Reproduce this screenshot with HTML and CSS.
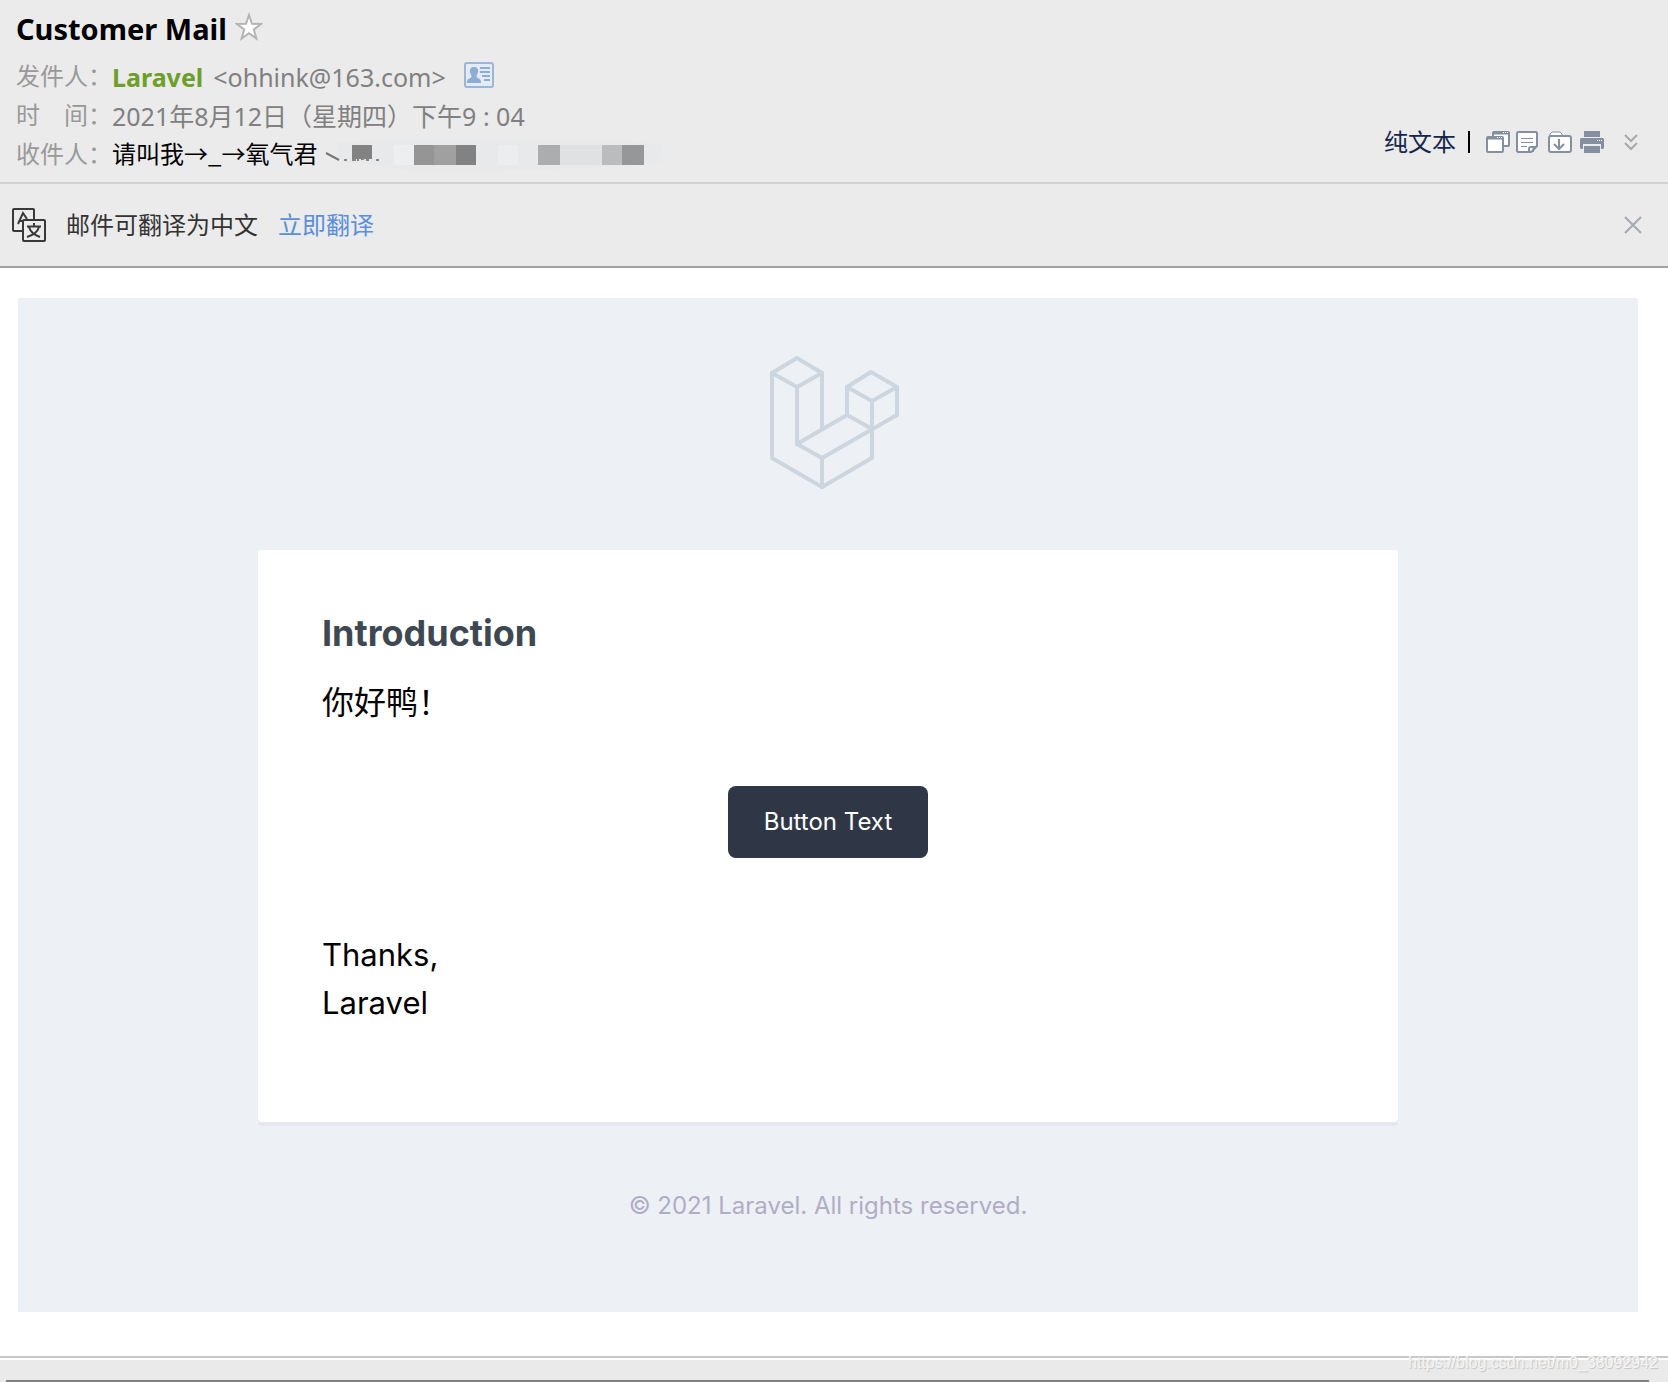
FILE: index.html
```
<!DOCTYPE html>
<html lang="zh-CN">
  <head>
    <meta charset="UTF-8" />
    <title>Customer Mail</title>
    <link rel="stylesheet" href="styles.css">
  </head>
  <body>
    <header class="mail-header">
      <div class="mail-info">
        <div class="subject">
          <h1>Customer Mail</h1>
          <button type="button" class="icon-button" aria-label="星标">
            <svg width="28" height="30" viewBox="0 0 28 30"><path d="M14 3 L17 11.8 L26 12 L18.8 17.4 L21.4 26.5 L14 21.2 L6.6 26.5 L9.2 17.4 L2 12 L11 11.8 Z" fill="#fff" stroke="#b4b4b4" stroke-width="2"/></svg>
          </button>
        </div>
        <dl class="fields">
          <dt>发件人：</dt>
          <dd>
            <b class="sender">Laravel</b>
            <span>&lt;ohhink@163.com&gt;</span>
            <button type="button" class="icon-button card-button" aria-label="联系人">
              <svg width="30" height="26" viewBox="0 0 30 26">
                <rect x="1" y="1" width="28" height="24" rx="2" fill="#e3ebf5" stroke="#9db6d6" stroke-width="2"/>
                <path d="M10 5 C13 5 14.5 7 14 10 C13.800 12 12.500 13 12.500 14.500 C12.500 16.500 17 16 17 20 V21 H3 V20 C3 16 7.500 16.500 7.500 14.500 C7.500 13 6.200 12 6 10 C5.500 7 7 5 10 5 Z" fill="#8fadd3"/>
                <path d="M16 6 H26 M16 10 H26 M18 14 H26 M20 18 H26" stroke="#8fadd3" stroke-width="2"/>
              </svg>
            </button>
          </dd>
          <dt>时&emsp;间：</dt>
          <dd>2021年8月12日（星期四）下午9 : 04</dd>
          <dt>收件人：</dt>
          <dd class="receiver">
            <span class="cjk">请叫我→_→氧气君</span>
            <!-- hidden address -->
            <svg class="mosaic" width="340" height="36" viewBox="0 0 340 36">
              <path d="M12 5 L60 3 L300 4 L338 8 L334 18 L338 26 L260 31 L170 34 H80 L60 29 L12 24 Z" fill="#e8e9eb"/>
              <path d="M1 16 L14 23" stroke="#777" stroke-width="2"/>
              <path d="M19 23 H22 M27 23 H31 M32 23 H34 M36 22 H39 M41 23 H44 M51 23 H54" stroke="#888" stroke-width="2"/>
              <rect x="27" y="8" width="20" height="14" fill="#828283"/>
              <rect x="69" y="8" width="20" height="20" fill="#edeef0"/>
              <rect x="89" y="8" width="20" height="20" fill="#959596"/>
              <rect x="109" y="8" width="22" height="20" fill="#a0a0a0"/>
              <rect x="131" y="8" width="20" height="20" fill="#828283"/>
              <rect x="173" y="8" width="20" height="20" fill="#ecedef"/>
              <rect x="213" y="8" width="22" height="20" fill="#acadae"/>
              <rect x="235" y="8" width="42" height="20" fill="#e0e1e2"/>
              <rect x="277" y="8" width="20" height="20" fill="#bbbcbd"/>
              <rect x="297" y="8" width="22" height="20" fill="#969798"/>
            </svg>
          </dd>
        </dl>
      </div>
      <nav class="actions">
        <a href="#" class="plain-text cjk">纯文本</a>
        <span class="divider"></span>
        <button type="button" class="icon-button" aria-label="新窗口">
          <svg width="24" height="22" viewBox="0 0 24 22">
            <rect x="7" y="1" width="16" height="14" rx="1" fill="#fff" stroke="#84909f" stroke-width="2"/>
            <path d="M7 2 H23" stroke="#84909f" stroke-width="3"/>
            <rect x="1" y="6" width="16" height="15" rx="1" fill="#fff" stroke="#84909f" stroke-width="2"/>
            <path d="M1 7 H17" stroke="#84909f" stroke-width="3"/>
            <path d="M11 6.500 H16 M17 1.500 H22" stroke="#fff" stroke-dasharray="1 1"/>
          </svg>
        </button>
        <button type="button" class="icon-button note-button" aria-label="便笺">
          <svg width="22" height="22" viewBox="0 0 22 22">
            <path d="M2 1 H20 L21 2 V15 L15 21 H2 L1 20 V2 Z" fill="#fff" stroke="#84909f" stroke-width="2"/>
            <path d="M13 21 V18 Q13 16 15 16 H20 Q17 17 17 20 Z" fill="#fff" stroke="#84909f" stroke-width="2"/>
            <path d="M5 7.500 H17 M5 11.500 H17 M5 15.500 H11" stroke="#84909f" stroke-width="1"/>
          </svg>
        </button>
        <button type="button" class="icon-button" aria-label="归档">
          <svg width="24" height="22" viewBox="0 0 24 22">
            <path d="M2 6 V3 L4 1 H12 L14 3 V5" fill="#fff" stroke="#84909f" stroke-width="1"/>
            <rect x="1" y="5" width="22" height="16" rx="2" fill="#fff" stroke="#84909f" stroke-width="2"/>
            <path d="M11 8 V18 M6 13 L11 18 L16 13" fill="none" stroke="#84909f" stroke-width="2"/>
          </svg>
        </button>
        <button type="button" class="icon-button" aria-label="打印">
          <svg width="24" height="22" viewBox="0 0 24 22">
            <path d="M4 0 H20 V6 H4 Z M1 7 H23 L24 8 V17 L23 18 H21 V13 H3 V18 H1 L0 17 V8 Z M4 15 H20 V22 H4 Z" fill="#84909f"/>
            <path d="M17 9.500 H22" stroke="#fff" stroke-dasharray="1 1"/>
          </svg>
        </button>
        <button type="button" class="icon-button more-button" aria-label="更多">
          <svg width="14" height="18" viewBox="0 0 14 18"><path d="M1 2 L7 8 L13 2 M1 10 L7 16 L13 10" fill="none" stroke="#a9a9a9" stroke-width="2"/></svg>
        </button>
      </nav>
    </header>

    <div class="translate-bar">
      <svg width="34" height="34" viewBox="0 0 34 34">
        <path d="M22 11 V2 Q22 1 21 1 H2 Q1 1 1 2 V22 Q1 23 2 23 H10" fill="none" stroke="#38393b" stroke-width="2"/>
        <path d="M6 16 L11 5 L15 11 M8 13 H11" fill="none" stroke="#38393b" stroke-width="2"/>
        <rect x="11" y="12" width="22" height="21" rx="1" fill="none" stroke="#38393b" stroke-width="2"/>
        <path d="M22 15 V18 M15 18.500 H29 M17 19 Q19 26 28 29 M27 19 Q25 26 15 29" fill="none" stroke="#38393b" stroke-width="2"/>
      </svg>
      <span class="cjk">邮件可翻译为中文</span>
      <a href="#" class="cjk">立即翻译</a>
      <button type="button" class="icon-button close-button" aria-label="关闭">
        <svg width="18" height="18" viewBox="0 0 18 18"><path d="M1 1 L17 17 M17 1 L1 17" stroke="#a3aab1" stroke-width="2"/></svg>
      </button>
    </div>

    <main class="mail-body">
      <!-- laravel logo -->
      <svg class="logo" width="150" height="150" viewBox="1 0 150 150">
        <g fill="none" stroke="#cdd5df" stroke-width="4" stroke-linejoin="round" stroke-linecap="round">
          <path d="M20 25 L45 10 L70 25 L45 39 Z"/>
          <path d="M20 25 V110 L70 139 L120 110 V81"/>
          <path d="M45 39 V96 L70 110 V139"/>
          <path d="M70 25 V81"/>
          <path d="M45 96 L95 67"/>
          <path d="M70 110 L145 67 V39 L119 24 L95 39 V67 L120 81"/>
          <path d="M95 39 L120 53 L145 39 M120 53 V81"/>
        </g>
      </svg>
      <section class="card">
        <h2>Introduction</h2>
        <p class="greeting">你好鸭！</p>
        <div class="action">
          <button type="button" class="main-button">Button Text</button>
        </div>
        <p>Thanks,<br>Laravel</p>
      </section>
      <p class="copyright">© 2021 Laravel. All rights reserved.</p>
    </main>

    <footer class="bottom-bar">
      <span class="watermark">https://blog.csdn.net/m0_38092942</span>
    </footer>
  </body>
</html>
```
FILE: styles.css
```
* {
    box-sizing: border-box;
}

body {
    margin: 0;
    background-color: #fff;
    font-family: "Noto Sans", "Noto Sans CJK SC", sans-serif;
    font-size: 24px;
    color: #000;
}

h1, h2, p, dl, dd {
    margin: 0;
}

a {
    text-decoration: none;
}

svg {
    display: block;
}

.icon-button {
    padding: 0;
    border: none;
    background: none;
    cursor: pointer;
}

/* chinese glyphs sit low in their line box */
.cjk {
    padding-bottom: 4px;
}

.mail-header {
    display: flex;
    justify-content: space-between;
    align-items: flex-end;
    padding: 7px 30px 8px 16px;
    background-color: #ebebeb;
    border-bottom: 2px solid #d1d1d1;
}

.subject {
    display: flex;
    align-items: center;
    gap: 8px;
    height: 44px;
}

.subject h1 {
    font-size: 29px;
    line-height: 44px;
}

.subject .icon-button {
    margin-bottom: 4px;
}

.fields {
    display: grid;
    grid-template-columns: 96px auto;
    line-height: 38px;
    margin-top: 6px;
}

.fields dt {
    color: #999;
}

.fields dd {
    display: flex;
    align-items: center;
    gap: 10px;
    height: 39px;
    font-size: 25px;
    color: #808080;
}

.sender {
    color: #6f9f2b;
}

.card-button {
    margin: 0 0 4px 8px;
}

.fields .receiver {
    gap: 8px;
    font-family: "Noto Sans CJK SC", sans-serif;
    font-size: 24px;
    color: #000;
}

.actions {
    display: flex;
    align-items: center;
    gap: 8px;
    height: 64px;
}

.plain-text {
    color: #14264b;
}

.divider {
    width: 2px;
    height: 22px;
    margin: 0 8px 0 4px;
    background-color: #000;
}

.note-button {
    margin: 0 2px 0 -2px;
}

.more-button {
    margin-left: 12px;
}

.translate-bar {
    display: flex;
    align-items: center;
    gap: 20px;
    height: 84px;
    padding: 0 26px 0 12px;
    background-color: #ebebeb;
    border-bottom: 2px solid #a0a0a0;
    color: #333;
}

.translate-bar a {
    color: #5b8edb;
}

.close-button {
    margin-left: auto;
}

.mail-body {
    margin: 30px 30px 44px 18px;
    padding: 50px 0 88px;
    background-color: #edf0f5;
    font-family: Inter, "Noto Sans CJK SC", sans-serif;
}

.logo {
    margin: 0 auto 52px;
}

.card {
    max-width: 1140px;
    margin: 0 auto;
    padding: 64px 64px 95px;
    background-color: #fff;
    border-radius: 4px;
    box-shadow: 0 4px 0 #e6e7f2;
    font-size: 31px;
    line-height: 48px;
}

.card h2 {
    margin-bottom: 27px;
    font-size: 36px;
    line-height: 38px;
    color: #3d4852;
}

.greeting {
    font-size: 32px;
}

.action {
    margin: 59px 0 73px;
    text-align: center;
}

.main-button {
    display: block;
    margin: 0 auto;
    padding: 18px 36px;
    border: none;
    border-radius: 8px;
    background-color: #2f3747;
    color: #fff;
    font-family: inherit;
    font-size: 24px;
    line-height: 36px;
    cursor: pointer;
}

.copyright {
    margin-top: 66px;
    line-height: 36px;
    text-align: center;
    color: #b0adc5;
}

.bottom-bar {
    position: relative;
    height: 26px;
    border-top: 2px solid #c8c8c8;
    background: linear-gradient(#808080, #808080) 6px 22px / calc(100% - 25px) 2px no-repeat,
        linear-gradient(#fff 2px, #eaeaea 2px);
}

/* lies over the top border of the bar */
.watermark {
    position: absolute;
    top: -4px;
    right: 10px;
    font-family: "Liberation Sans", sans-serif;
    font-size: 16px;
    line-height: 18px;
    color: #f4f4f4;
    text-shadow: 1px 1px 1px #c4c4c4;
}
```
